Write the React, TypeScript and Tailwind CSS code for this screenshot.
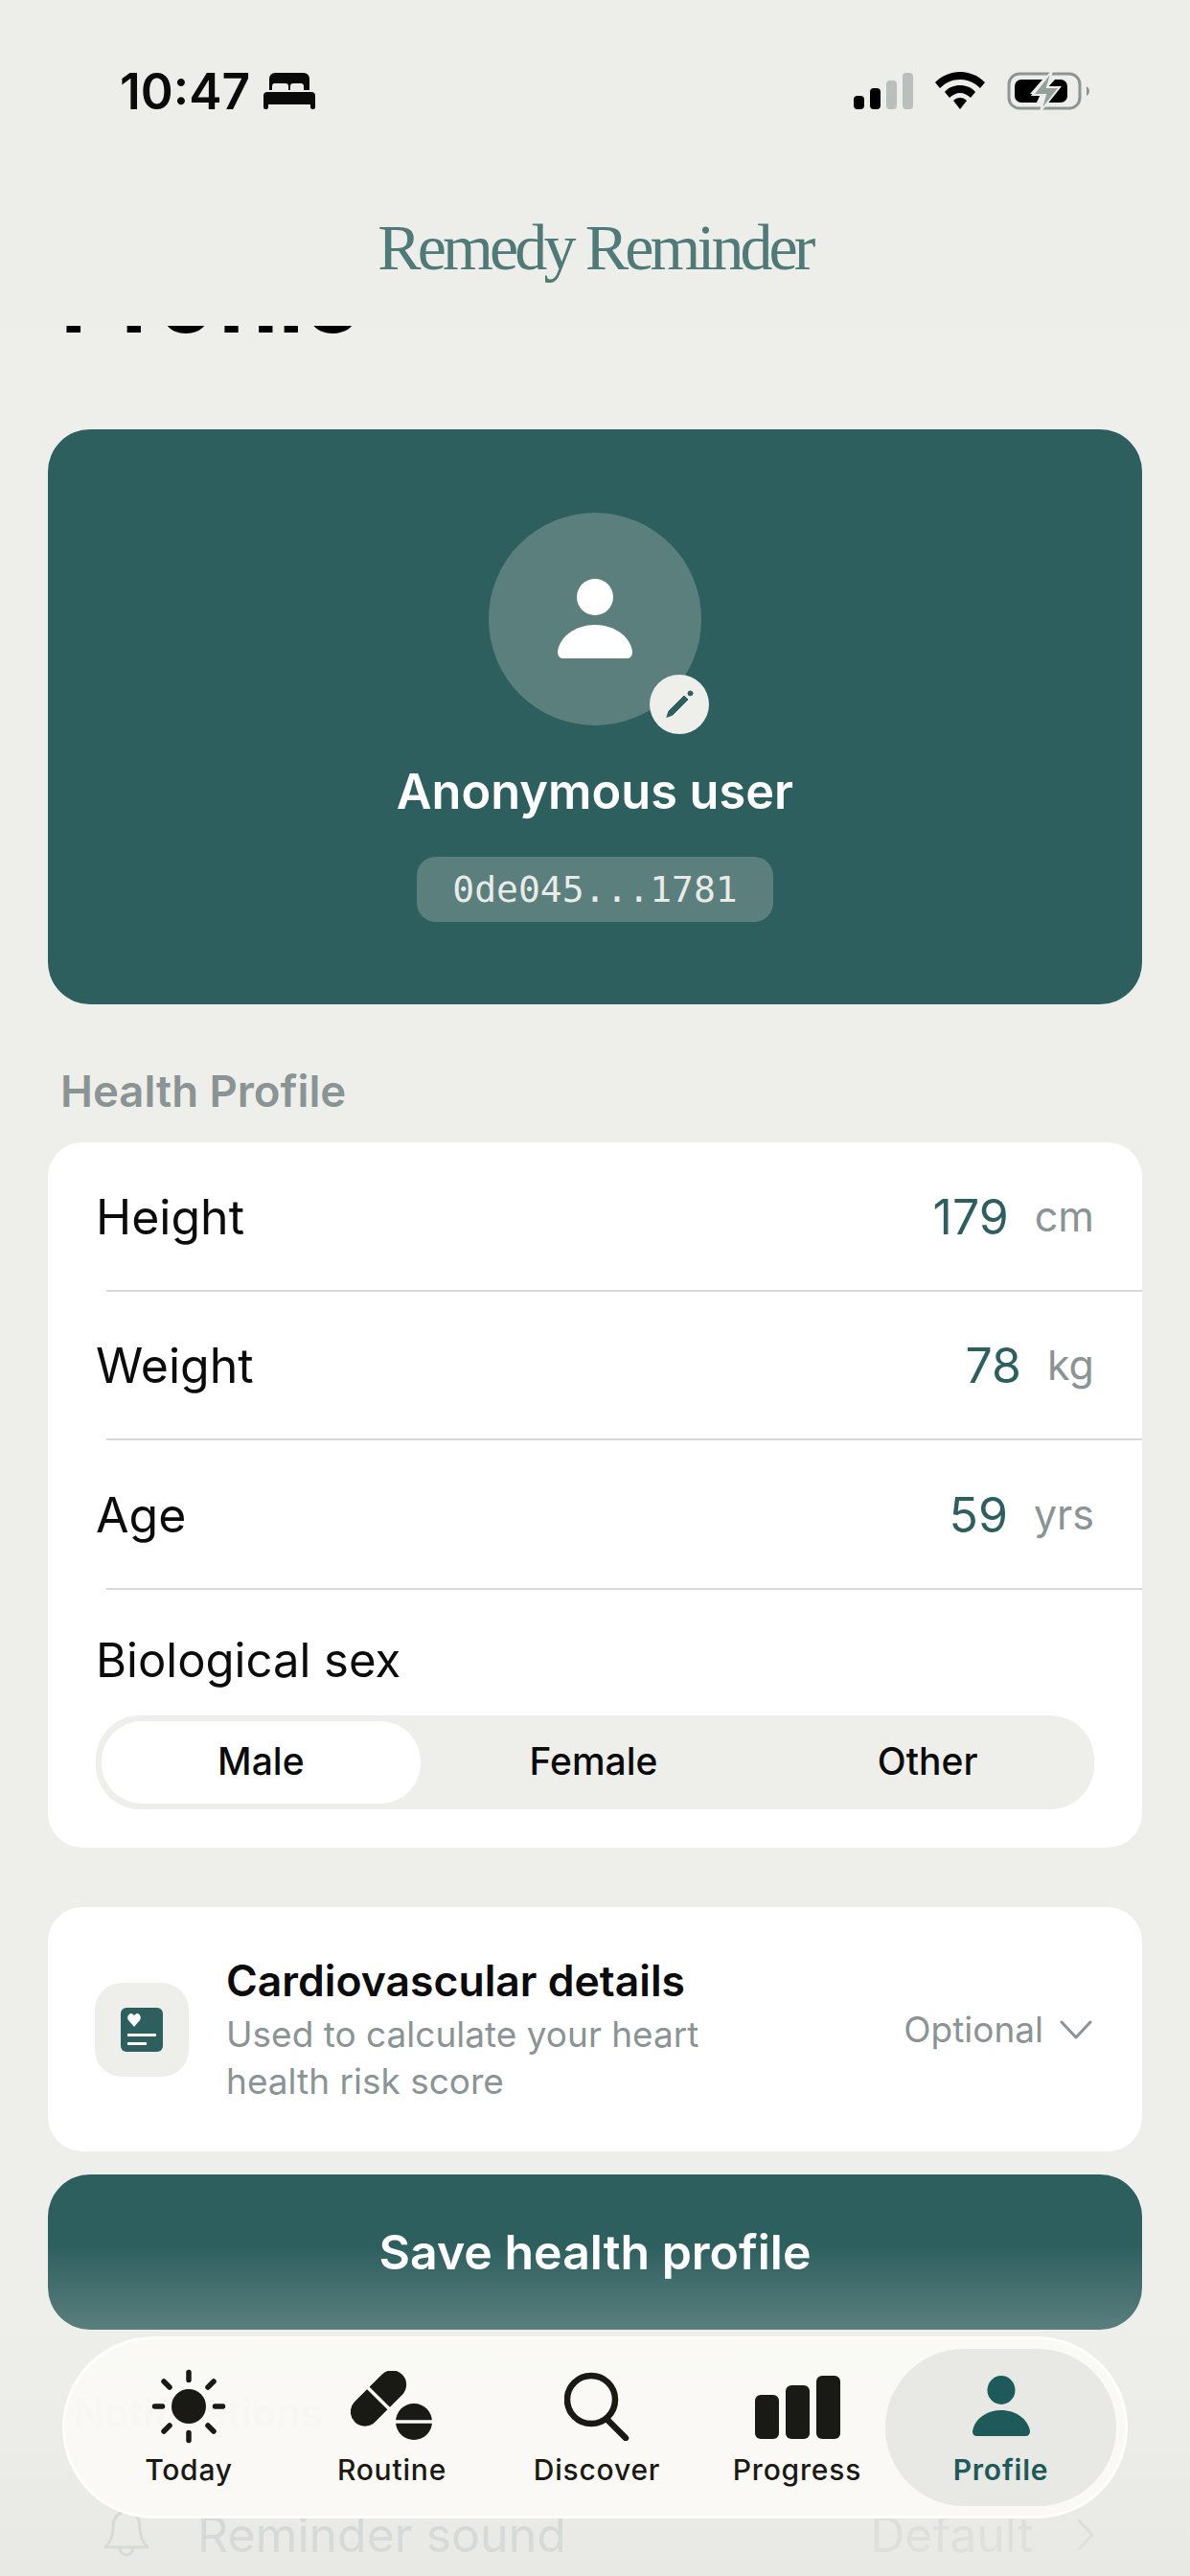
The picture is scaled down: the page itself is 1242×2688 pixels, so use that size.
import React from 'react';

const fontSans = 'font-["Inter","Liberation_Sans",sans-serif]';

const Row: React.FC<{ label: string; value: string; unit: string }> = ({ label, value, unit }) => (
  <>
    <div className="flex h-[153.5px] items-center justify-between px-[50px] pt-[2px]">
      <span className="text-[50px] leading-none text-[#0b0b0b]">{label}</span>
      <div className="flex items-baseline gap-[27px]">
        <span className="text-[50px] leading-none text-[#2d5f5f]">{value}</span>
        <span className="-translate-y-[3px] text-[43px] leading-none text-[#8a9494]">{unit}</span>
      </div>
    </div>
    <div className="ml-[61px] h-[2px] bg-[#d8d9d5]" />
  </>
);

const SunIcon = () => (
  <svg width="80" height="80" viewBox="0 0 80 80" fill="#1a1a14" stroke="#1a1a14" strokeWidth="5.5" strokeLinecap="round">
    <circle cx="40" cy="40" r="18" stroke="none" />
    <path d="M40 4.5v8M40 67.5v8M4.5 40h8M67.5 40h8M14 14l6 6M60 60l6 6M14 66l6-6M60 20l6-6" fill="none" />
  </svg>
);

const PillsIcon = () => (
  <svg width="86" height="74" viewBox="0 0 86 74" fill="#1a1a14">
    <g transform="rotate(-45 29 28.5)">
      <rect x="-6" y="13.5" width="70" height="30" rx="15" />
      <path d="M29 10v37" stroke="#fbfaf6" strokeWidth="3.5" />
    </g>
    <circle cx="66" cy="53" r="19" />
    <path d="M45 53h42" stroke="#fbfaf6" strokeWidth="3.5" />
  </svg>
);

const SearchIcon = () => (
  <svg width="68" height="72" viewBox="0 0 68 72" fill="none" stroke="#1a1a14" strokeWidth="6.5" strokeLinecap="round">
    <circle cx="28" cy="29" r="25" />
    <path d="M44 49 64 69" />
  </svg>
);

const BarsIcon = () => (
  <div className="flex h-[68px] items-end gap-[7px]">
    <div className="h-[46px] w-[25px] rounded-[6px] bg-[#1a1a14]" />
    <div className="h-[56px] w-[25px] rounded-[6px] bg-[#1a1a14]" />
    <div className="h-[66px] w-[25px] rounded-[6px] bg-[#1a1a14]" />
  </div>
);

const PersonIcon = () => (
  <svg width="60" height="64" viewBox="0 0 60 64" fill="#1f5a5a">
    <ellipse cx="30" cy="15" rx="14.5" ry="15" />
    <path d="M0 58C2 45 15 36 30 36s28 9 30 22c0 3-2 5-4 5H4c-2 0-4-2-4-5Z" />
  </svg>
);

const tabs = [
  { label: 'Today', width: 'w-[230px]', icon: <SunIcon /> },
  { label: 'Routine', width: 'w-[194px]', icon: <PillsIcon /> },
  { label: 'Discover', width: 'w-[234px]', icon: <SearchIcon /> },
  { label: 'Progress', width: 'w-[184px]', icon: <BarsIcon /> },
];

const App: React.FC = () => {
  return (
    <div className={`relative flex h-[2688px] w-[1242px] flex-col overflow-hidden bg-[#eeefea] ${fontSans}`}>
      {/* status bar and app title */}
      <header className="relative z-10 h-[340px] flex-none bg-[#edeeea]">
        <div className="flex items-start justify-between pl-[125px] pr-[105px] pt-[68px]">
          <div className="flex items-center gap-[14px]">
            <span className="text-[51.5px] font-semibold leading-[54px] text-[#0a0a0a]">10:47</span>
            <svg width="54" height="38" viewBox="0 0 54 38" fill="#0a0a0a">
              <path d="M6 18V6a6 6 0 0 1 6-6h30a6 6 0 0 1 6 6v12h-6v-4a3 3 0 0 0-3-3H31a3 3 0 0 0-3 3v4h-2v-4a3 3 0 0 0-3-3H11a3 3 0 0 0-2 3v4Z" />
              <path d="M4 20h46a4 4 0 0 1 4 4v12a2 2 0 0 1-2 2h-1a2 2 0 0 1-2-2v-3H5v3a2 2 0 0 1-2 2H2a2 2 0 0 1-2-2V24a4 4 0 0 1 4-4Z" />
            </svg>
          </div>
          <div className="flex items-center gap-[22px] pt-[6px]">
            <div className="flex h-[38px] items-end gap-[6px]">
              <div className="h-[14px] w-[11px] rounded-[4px] bg-black" />
              <div className="h-[22px] w-[11px] rounded-[4px] bg-black" />
              <div className="h-[30px] w-[11px] rounded-[4px] bg-[#b9bfbc]" />
              <div className="h-[38px] w-[11px] rounded-[4px] bg-[#b9bfbc]" />
            </div>
            <svg width="54" height="40" viewBox="0 0 54 40" fill="#000">
              <path d="M27 0c10 0 19 4 26 11l-5 6C42 11 35 8 27 8S12 11 6 17l-5-6C8 4 17 0 27 0Z" />
              <path d="M27 14c6 0 12 2 16 7l-5 6c-3-3-7-5-11-5s-8 2-11 5l-5-6c4-5 10-7 16-7Z" />
              <path d="M27 27c3 0 5 1 7 3l-7 9-7-9c2-2 4-3 7-3Z" />
            </svg>
            <svg width="86" height="42" viewBox="0 0 86 42">
              <rect x="2" y="3" width="74" height="36" rx="11" fill="none" stroke="#8d9694" strokeWidth="3" />
              <path d="M83 16c2 1 3 3 3 5s-1 4-3 5Z" fill="#8d9694" />
              <path d="M8 16a7 7 0 0 1 7-7h22L24 24h11l-4 9H15a7 7 0 0 1-7-7Z" fill="#000" />
              <path d="M50 9h6a7 7 0 0 1 7 7v10a7 7 0 0 1-7 7H40l13-15H42Z" fill="#000" />
              <path d="M47 0 27 25h13l-5 17 20-25H42Z" fill="#94a09d" stroke="#edeeea" strokeWidth="2" />
            </svg>
          </div>
        </div>
        <div className="mt-[91px] text-center font-['Liberation_Serif',serif] text-[68px] leading-[90px] tracking-[-3.9px] text-[#4f7a78]">
          Remedy Reminder
        </div>
      </header>

      {/* scrolled content, clipped by the header */}
      <main className="min-h-0 flex-1 overflow-hidden px-[50px]">
        <h1 className="-mt-[77px] ml-[13px] text-[98px] font-bold leading-[98px] text-black">Profile</h1>

        <section className="mt-[87px] flex h-[600px] flex-col items-center rounded-[44px] bg-[#2d5f5f] pt-[87px]">
          <div className="relative flex h-[222px] w-[222px] items-center justify-center rounded-full bg-[#5a7f7d]">
            <svg width="78" height="84" viewBox="0 0 78 84" fill="#fff">
              <circle cx="39" cy="19" r="19" />
              <path d="M0 76C2 60 19 48 39 48s37 12 39 28c0 4-2 7-5 7H5c-3 0-5-3-5-7Z" />
            </svg>
            <div className="absolute left-[168px] top-[169px] flex h-[62px] w-[62px] items-center justify-center rounded-full bg-[#eeefea]">
              <svg width="36" height="36" viewBox="0 0 36 36" fill="none" stroke="#2d5f5f" strokeLinecap="round">
                <path d="M5 31 7 25 23 9l4 4L11 29Z" fill="#2d5f5f" strokeWidth="1" strokeLinejoin="round" />
                <circle cx="29.5" cy="6.5" r="2.5" fill="#2d5f5f" strokeWidth="1" />
              </svg>
            </div>
          </div>
          <div className="mt-[39px] text-[50.5px] font-semibold leading-[60px] text-white">Anonymous user</div>
          <div className="mt-[38px] flex h-[68px] w-[372px] items-center justify-center rounded-[20px] bg-[#5a7f7d] font-['DejaVu_Sans_Mono',monospace] text-[38px] text-[#e9ebe6]">
            0de045...1781
          </div>
        </section>

        <div className="ml-[13px] mt-[66px] h-[78px] text-[45.5px] font-semibold leading-[50px] text-[#8a9494]">Health Profile</div>

        <section className="h-[736px] rounded-[36px] bg-white">
          <Row label="Height" value="179" unit="cm" />
          <Row label="Weight" value="78" unit="kg" />
          <Row label="Age" value="59" unit="yrs" />
          <div className="px-[50px] pt-[44px]">
            <div className="text-[49px] leading-[60px] text-[#0b0b0b]">Biological sex</div>
            <div className="mt-[27px] flex h-[98px] items-center rounded-[46px] bg-[#eeefea] p-[6px] text-[39px] font-medium text-[#0b0b0b]">
              <div className="flex h-[86px] w-[333px] items-center justify-center rounded-[42px] bg-white">Male</div>
              <div className="flex w-[362px] justify-center">Female</div>
              <div className="flex w-[336px] justify-center">Other</div>
            </div>
          </div>
        </section>

        <section className="mt-[62px] flex h-[255px] items-center rounded-[36px] bg-white pl-[49px] pr-[52px]">
          <div className="flex h-[98px] w-[98px] flex-none items-center justify-center rounded-[28px] bg-[#eeefea]">
            <svg width="44" height="46" viewBox="0 0 44 46">
              <rect width="44" height="46" rx="6" fill="#2d5f5f" />
              <path d="M14 20 8 13c-2-3 0-7 3-7 1 0 2 1 3 2 1-1 2-2 3-2 3 0 5 4 3 7Z" fill="#fff" />
              <path d="M7 27h30v3H7ZM7 36h20v3H7Z" fill="#fff" />
            </svg>
          </div>
          <div className="ml-[39px] flex-1">
            <div className="text-[44.5px] font-semibold leading-[56px] text-[#0b0b0b]">Cardiovascular details</div>
            <div className="mt-[3px] text-[37px] leading-[49px] text-[#8a9494]">
              Used to calculate your heart
              <br />
              health risk score
            </div>
          </div>
          <div className="flex items-center gap-[17px] text-[37px] text-[#8a9494]">
            <span>Optional</span>
            <svg width="34" height="20" viewBox="0 0 34 20" fill="none" stroke="#8a9494" strokeWidth="3" strokeLinecap="round" strokeLinejoin="round">
              <path d="M2 2 17 18 32 2" />
            </svg>
          </div>
        </section>

        <button className="mt-[24px] block h-[162px] w-full rounded-[44px] bg-gradient-to-b from-[#2d5f5f] from-45% to-[#5a7f7d] text-[50px] font-semibold text-white">
          Save health profile
        </button>

        <div className="ml-[27px] mt-[62px] text-[42px] font-semibold leading-[50px] text-[#a9b0ae]">Notifications</div>

        <div className="mt-[72px] flex items-center text-[50px] leading-[60px] text-[#bfc8c8]">
          <svg className="ml-[58px]" width="48" height="56" viewBox="0 0 48 56" fill="none" stroke="#bfc8c8" strokeWidth="3" strokeLinejoin="round">
            <path d="M24 4c-9 0-14 7-14 16 0 10-3 15-8 21h44c-5-6-8-11-8-21 0-9-5-16-14-16Z" />
            <path d="M17 42a7 7 0 0 0 14 0" />
          </svg>
          <span className="ml-[50px] flex-1">Reminder sound</span>
          <span className="text-[#d3d6d4]">Default</span>
          <svg className="ml-[46px] mr-[50px]" width="18" height="34" viewBox="0 0 18 34" fill="none" stroke="#d3d6d4" strokeWidth="3" strokeLinecap="round" strokeLinejoin="round">
            <path d="M2 2 16 17 2 32" />
          </svg>
        </div>
      </main>

      {/* fade behind the floating tab bar */}
      <div className="pointer-events-none absolute inset-x-0 bottom-0 h-[258px] bg-gradient-to-b from-[#eeefea]/0 to-[#e6e6e2]/70" />

      <nav className="absolute left-[65px] top-[2438px] flex h-[190px] w-[1112px] items-center rounded-[95px] border-[3px] border-[#fdfdfb] bg-[#fbfaf6]/95 pl-[14px] text-[30px] font-medium leading-[36px] text-[#1a1a14]">
        {tabs.map((tab) => (
          <div key={tab.label} className={`flex flex-none flex-col items-center ${tab.width}`}>
            <div className="flex h-[80px] items-center justify-center">{tab.icon}</div>
            <span className="mt-[8px] tracking-[0.8px]">{tab.label}</span>
          </div>
        ))}
        <div className="flex h-[164px] w-[241px] flex-none flex-col items-center justify-center rounded-[82px] bg-[#e8e8e4] text-[#1f5a5a]">
          <div className="flex h-[80px] items-center justify-center">
            <PersonIcon />
          </div>
          <span className="mt-[8px] font-semibold tracking-[0.8px]">Profile</span>
        </div>
      </nav>
    </div>
  );
};

export default App;
